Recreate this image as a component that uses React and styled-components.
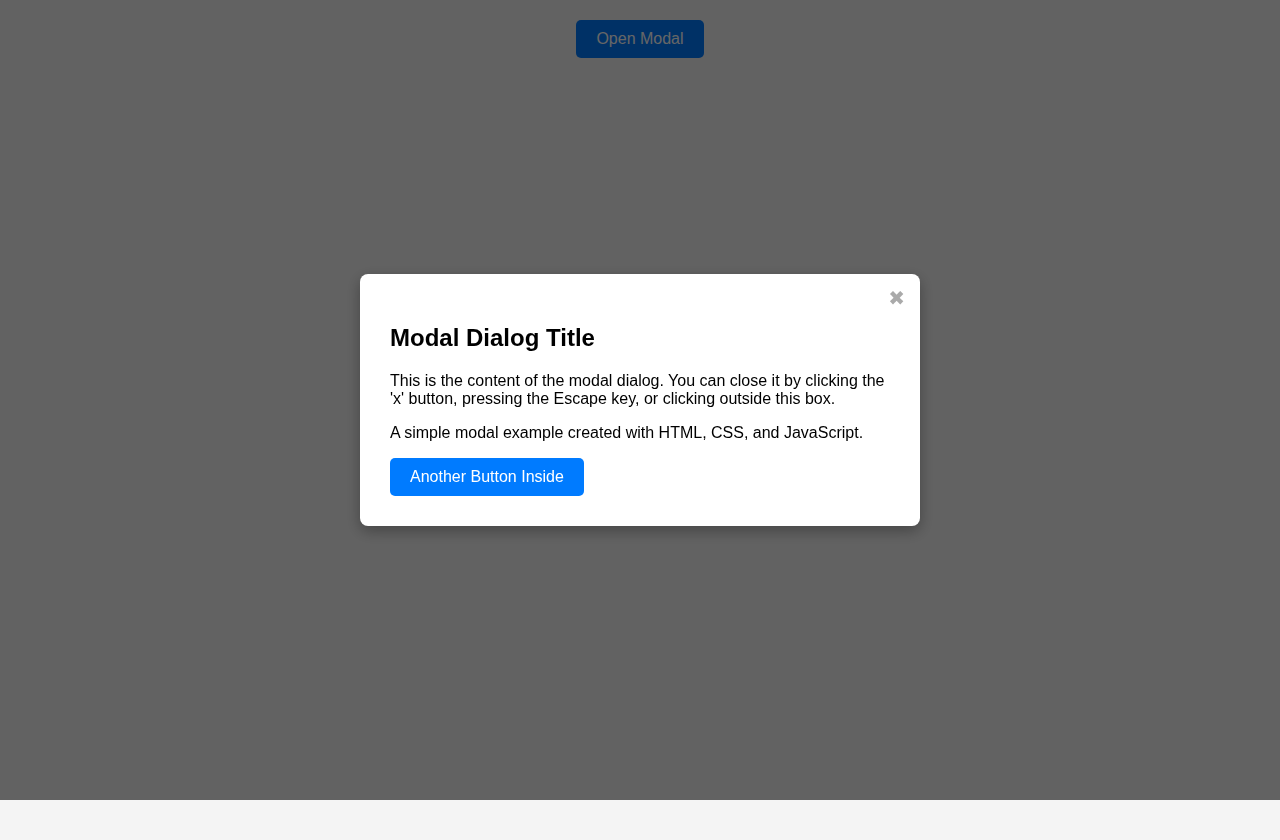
import React from 'react';
import styled, { createGlobalStyle } from 'styled-components';

const GlobalStyle = createGlobalStyle`
  html, body {
    margin: 0;
    padding: 0;
  }
  body {
    background: #f4f4f4;
    font-family: "Liberation Sans", Arial, sans-serif;
    color: #000;
  }
`;

const Page = styled.div`
  padding: 20px;
  text-align: center;
  height: 800px;
  box-sizing: border-box;
`;

const Button = styled.button`
  display: inline-block;
  vertical-align: top;
  padding: 10px 20px;
  font-family: "Liberation Sans", Arial, sans-serif;
  font-size: 16px;
  line-height: 18px;
  color: #fff;
  background: #007bff;
  border: none;
  border-radius: 5px;
  cursor: pointer;
`;

const Overlay = styled.div`
  position: fixed;
  top: 0;
  left: 0;
  width: 100%;
  height: 800px;
  background: rgba(0, 0, 0, 0.6);
  display: flex;
  align-items: center;
  justify-content: center;
`;

const Dialog = styled.div`
  position: relative;
  width: 560px;
  box-sizing: border-box;
  padding: 30px;
  background: #fff;
  border-radius: 8px;
  box-shadow: 0 5px 15px rgba(0, 0, 0, 0.3);
  text-align: left;
`;

const Close = styled.span`
  position: absolute;
  top: 14px;
  right: 15px;
  font-family: "DejaVu Sans", sans-serif;
  font-size: 20px;
  line-height: 1;
  color: #aaa;
  cursor: pointer;
`;

const Title = styled.h2`
  font-size: 24px;
  font-weight: bold;
  margin: 0.83em 0;
`;

const Text = styled.p`
  font-size: 16px;
  line-height: 18px;
  margin: 16px 0;
`;

const Actions = styled.div`
  display: flex;
`;

export default function App() {
  return (
    <>
      <GlobalStyle />
      <Page>
        <Button>Open Modal</Button>
      </Page>
      <Overlay>
        <Dialog role="dialog" aria-modal="true">
          <Close aria-label="Close">✖</Close>
          <Title>Modal Dialog Title</Title>
          <Text>
            This is the content of the modal dialog. You can close it by clicking the 'x' button,
            pressing the Escape key, or clicking outside this box.
          </Text>
          <Text>A simple modal example created with HTML, CSS, and JavaScript.</Text>
          <Actions>
            <Button>Another Button Inside</Button>
          </Actions>
        </Dialog>
      </Overlay>
    </>
  );
}
